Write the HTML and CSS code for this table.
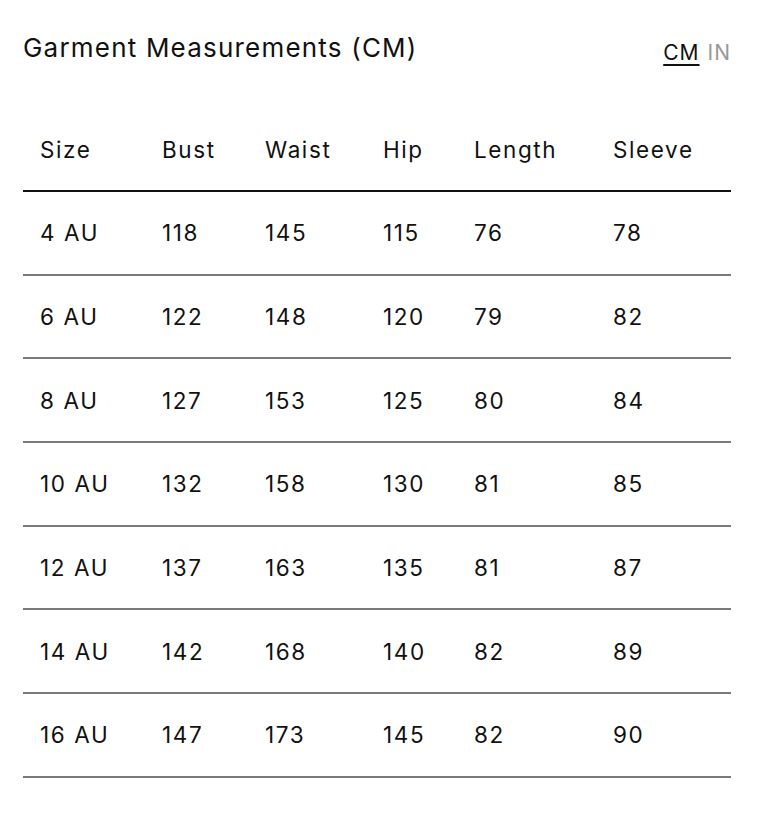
FILE: index.html
```html
<!DOCTYPE html>
<html>
<head>
<meta charset="utf-8">
<link rel="stylesheet" href="styles.css">
</head>
<body>
<div class="wrap">
  <div class="head">
    <h2 class="title">Garment Measurements (CM)</h2>
    <div class="units"><span class="unit active">CM</span><span class="unit">IN</span></div>
  </div>
  <table class="chart">
    <colgroup>
      <col class="c1"><col class="c2"><col class="c3"><col class="c4"><col class="c5"><col class="c6">
    </colgroup>
    <thead>
      <tr><th>Size</th><th>Bust</th><th>Waist</th><th>Hip</th><th>Length</th><th>Sleeve</th></tr>
    </thead>
    <tbody>
      <tr><td>4 AU</td><td>118</td><td>145</td><td>115</td><td>76</td><td>78</td></tr>
      <tr><td>6 AU</td><td>122</td><td>148</td><td>120</td><td>79</td><td>82</td></tr>
      <tr><td>8 AU</td><td>127</td><td>153</td><td>125</td><td>80</td><td>84</td></tr>
      <tr><td>10 AU</td><td>132</td><td>158</td><td>130</td><td>81</td><td>85</td></tr>
      <tr><td>12 AU</td><td>137</td><td>163</td><td>135</td><td>81</td><td>87</td></tr>
      <tr><td>14 AU</td><td>142</td><td>168</td><td>140</td><td>82</td><td>89</td></tr>
      <tr><td>16 AU</td><td>147</td><td>173</td><td>145</td><td>82</td><td>90</td></tr>
    </tbody>
  </table>
</div>
</body>
</html>
```
FILE: styles.css
```css
html, body { margin: 0; padding: 0; background: #fff; }
body { font-family: Inter, "Liberation Sans", sans-serif; color: #111; }
.wrap { padding: 32px 37px 0 23px; }
.head { display: flex; justify-content: space-between; align-items: flex-start; height: 76px; }
.title { margin: 0; font-size: 26px; font-weight: 400; line-height: 32px; letter-spacing: 1.2px; }
.units { display: flex; gap: 8px; font-size: 21px; line-height: 28px; margin-top: 7px; letter-spacing: 1px; }
.unit { color: #999; }
.unit.active { color: #111; text-decoration: underline; text-decoration-thickness: 2px; text-underline-offset: 4px; }
.chart { width: 708px; border-collapse: collapse; table-layout: fixed; font-size: 22.5px; letter-spacing: 1.6px; }
.c1 { width: 122px; } .c2 { width: 103px; } .c3 { width: 118px; } .c4 { width: 91px; } .c5 { width: 139px; } .c6 { width: 135px; }
th, td { text-align: left; font-weight: 400; padding: 0 0 0 17px; vertical-align: middle; }
th { height: 82px; }
td { height: 81.7px; }
thead tr { border-bottom: 2px solid #111; }
tbody tr { border-bottom: 2px solid #7a7a7a; }
```
